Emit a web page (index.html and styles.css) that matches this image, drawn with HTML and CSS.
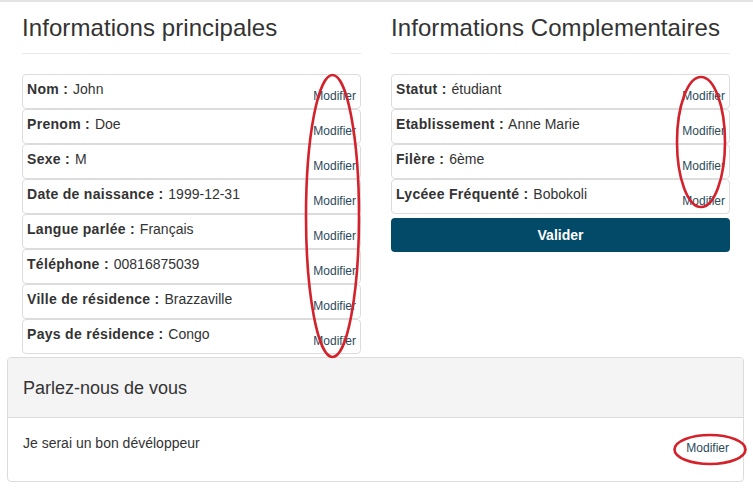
FILE: index.html
```html
<!DOCTYPE html>
<html lang="fr">
<head>
<meta charset="utf-8">
<title>Profil</title>
<link rel="stylesheet" href="styles.css">
</head>
<body>
<div class="topbar"></div>
<div class="container">
  <div class="row">
    <section class="col">
      <h3 class="heading">Informations principales</h3>
      <hr class="rule">
      <ul class="list">
        <li class="item"><span class="label"><b>Nom :</b> John</span><a class="edit">Modifier</a></li>
        <li class="item"><span class="label"><b>Prenom :</b> Doe</span><a class="edit">Modifier</a></li>
        <li class="item"><span class="label"><b>Sexe :</b> M</span><a class="edit">Modifier</a></li>
        <li class="item"><span class="label"><b>Date de naissance :</b> 1999-12-31</span><a class="edit">Modifier</a></li>
        <li class="item"><span class="label"><b>Langue parlée :</b> Français</span><a class="edit">Modifier</a></li>
        <li class="item"><span class="label"><b>Téléphone :</b> 00816875039</span><a class="edit">Modifier</a></li>
        <li class="item"><span class="label"><b>Ville de résidence :</b> Brazzaville</span><a class="edit">Modifier</a></li>
        <li class="item"><span class="label"><b>Pays de résidence :</b> Congo</span><a class="edit">Modifier</a></li>
      </ul>
    </section>
    <section class="col">
      <h3 class="heading">Informations Complementaires</h3>
      <hr class="rule">
      <ul class="list">
        <li class="item"><span class="label"><b>Statut :</b> étudiant</span><a class="edit">Modifier</a></li>
        <li class="item"><span class="label"><b>Etablissement :</b> Anne Marie</span><a class="edit">Modifier</a></li>
        <li class="item"><span class="label"><b>Filère :</b> 6ème</span><a class="edit">Modifier</a></li>
        <li class="item"><span class="label"><b>Lycéee Fréquenté :</b> Bobokoli</span><a class="edit">Modifier</a></li>
      </ul>
      <button class="btn">Valider</button>
    </section>
  </div>
  <div class="panel">
    <div class="panel-heading"><h3 class="panel-title">Parlez-nous de vous</h3></div>
    <div class="panel-body">
      <p class="bio">Je serai un bon dévéloppeur</p>
      <a class="edit edit-bio">Modifier</a>
    </div>
  </div>
</div>
<svg class="marks" width="753" height="491" viewBox="0 0 753 491" aria-hidden="true">
  <ellipse cx="332.5" cy="216" rx="26.5" ry="141" fill="none" stroke="#d3222c" stroke-width="2.6"/>
  <ellipse cx="701" cy="142" rx="24" ry="65" fill="none" stroke="#d3222c" stroke-width="2.6"/>
  <ellipse cx="710" cy="449.5" rx="35.5" ry="14.5" fill="none" stroke="#d3222c" stroke-width="2.6"/>
</svg>
</body>
</html>
```

FILE: styles.css
```css
* { box-sizing: border-box; }
html, body {
  margin: 0;
  padding: 0;
  background: #fff;
}
body {
  font-family: "Liberation Sans", Arial, sans-serif;
  font-size: 14px;
  line-height: 20px;
  color: #333;
  position: relative;
  width: 753px;
  height: 491px;
  overflow: hidden;
}
.topbar {
  height: 2px;
  background: #e3e3e3;
}
.container {
  margin-left: 7px;
  width: 737px;
}
.row {
  display: grid;
  grid-template-columns: 339px 339px;
  column-gap: 30px;
  padding: 0 14px 0 15px;
  align-items: start;
}
.heading {
  margin: 12px 0 0;
  font-size: 24px;
  font-weight: normal;
  line-height: 28px;
  color: #333;
  letter-spacing: 0.08px;
}
.rule {
  margin: 11px 0 20px;
  border: 0;
  border-top: 1px solid #e8e8e8;
  height: 0;
}
.list {
  list-style: none;
  margin: 0;
  padding: 0;
}
.item {
  height: 35px;
  border: 1px solid #dcdcdc;
  border-radius: 4px;
  padding: 4px 4px 3px 4px;
  display: flex;
  justify-content: space-between;
  background: #fff;
}
.label {
  align-self: flex-start;
  line-height: 20px;
}
.label b {
  font-weight: bold;
  letter-spacing: 0.3px;
  margin-right: 1px;
}
.edit {
  align-self: flex-end;
  font-size: 12px;
  line-height: 17px;
  color: #2b4a5b;
  text-decoration: none;
}
.btn {
  display: block;
  width: 100%;
  height: 34px;
  margin-top: 4px;
  border: 0;
  border-radius: 4px;
  background: #034a69;
  color: #fff;
  font-family: "Liberation Sans", Arial, sans-serif;
  font-size: 14px;
  font-weight: bold;
  line-height: 20px;
}
.panel {
  margin-top: 3px;
  border: 1px solid #dcdcdc;
  border-radius: 4px;
  overflow: hidden;
}
.panel-heading {
  height: 60px;
  background: #f4f4f4;
  border-bottom: 1px solid #dcdcdc;
  padding: 0 15px;
  display: flex;
  align-items: center;
}
.panel-title {
  margin: 0;
  font-size: 18px;
  font-weight: normal;
  line-height: 22px;
  color: #333;
}
.panel-body {
  height: 63px;
  padding: 15px 14px 0 15px;
  display: flex;
  justify-content: space-between;
  align-items: flex-start;
}
.bio {
  margin: 0;
  line-height: 20px;
}
.edit-bio {
  align-self: flex-start;
  margin-top: 7px;
}
.marks {
  position: absolute;
  left: 0;
  top: 0;
  pointer-events: none;
}
```
